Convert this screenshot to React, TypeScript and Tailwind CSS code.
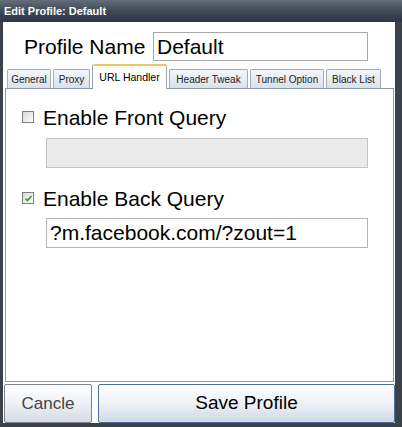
import React from 'react'

const tabs = [
    { label: 'General', w: 'w-[44px]' },
    { label: 'Proxy', w: 'w-[37px]' },
    { label: 'URL Handler', w: 'w-[75px]', active: true },
    { label: 'Header Tweak', w: 'w-[79px]' },
    { label: 'Tunnel Option', w: 'w-[74px]' },
    { label: 'Black List', w: 'w-[55px]' },
]

function CheckBox({ checked }: { checked?: boolean }) {
    return (
        <div className="w-[12px] h-[12px] border border-[#7f7f7f] bg-gradient-to-br from-[#d8d8d8] to-[#ffffff] flex items-center justify-center shrink-0">
            {checked && (
                <svg width="9" height="9" viewBox="0 0 9 9">
                    <path d="M1.5 4.5 L3.5 6.5 L7.5 2" fill="none" stroke="#3f8f3a" strokeWidth="1.6" />
                </svg>
            )}
        </div>
    )
}

export default function App() {
    return (
        <div className="w-[402px] h-[427px] flex flex-col bg-[#3c4249] font-['Liberation_Sans',Arial,sans-serif] overflow-hidden">
            {/* title bar */}
            <div className="h-[22px] shrink-0 bg-gradient-to-b from-[#646e79] via-[#3f4a56] to-[#2c3642] flex items-center pl-[4px]">
                <span className="text-white font-bold text-[11px] leading-none">Edit Profile: Default</span>
            </div>

            <div className="flex-1 flex flex-col ml-[3px] mr-[7px] bg-white">
                {/* profile name */}
                <div className="flex items-center pt-[7px] pl-[21px] h-[42px] shrink-0">
                    <span className="w-[129px] text-[21px] text-black leading-none">Profile Name</span>
                    <div className="w-[215px] h-[29px] border border-[#a9a9a9] flex items-center pl-[3px] text-[21px] text-black">
                        Default
                    </div>
                </div>

                {/* tabs */}
                <div className="flex items-end gap-[2px] pl-[4px] h-[24px] shrink-0 relative z-10">
                    {tabs.map((t) =>
                        t.active ? (
                            <div
                                key={t.label}
                                className={`${t.w} h-[25px] -mb-[1px] bg-white border border-[#9aa4ae] border-b-0 border-t-2 border-t-[#f0c46a] rounded-t-[2px] flex items-center justify-center text-[10.5px] text-black`}
                            >
                                {t.label}
                            </div>
                        ) : (
                            <div
                                key={t.label}
                                className={`${t.w} h-[19px] bg-gradient-to-b from-[#f4f6f9] to-[#d9e1ea] border border-[#a3acb6] border-b-0 rounded-t-[2px] flex items-center justify-center text-[10px] text-[#222]`}
                            >
                                {t.label}
                            </div>
                        )
                    )}
                </div>

                {/* panel */}
                <div className="h-[294px] shrink-0 ml-[2px] mr-[1px] border border-[#8f9aa5] bg-white flex flex-col pt-[16px]">
                    <div className="flex items-center gap-[9px] pl-[16px] h-[24px]">
                        <CheckBox />
                        <span className="text-[21px] leading-none text-black">Enable Front Query</span>
                    </div>
                    <div className="ml-[40px] mt-[9px] w-[322px] h-[30px] border border-[#c3c3c3] bg-[#ebebeb]" />
                    <div className="flex items-center gap-[9px] pl-[16px] h-[24px] mt-[18px]">
                        <CheckBox checked />
                        <span className="text-[21px] leading-none text-black">Enable Back Query</span>
                    </div>
                    <div className="ml-[40px] mt-[8px] w-[322px] h-[30px] border border-[#b5b5b5] bg-white flex items-center pl-[3px] text-[21px] text-black">
                        ?m.facebook.com/?zout=1
                    </div>
                </div>

                {/* buttons */}
                <div className="flex gap-[6px] pl-[1px] mt-[2px] h-[39px] shrink-0">
                    <button className="w-[88px] h-full border border-[#7d848c] rounded-[2px] bg-gradient-to-b from-[#ffffff] via-[#eef1f5] to-[#d3dbe6] text-[17px] text-[#444]">
                        Cancle
                    </button>
                    <button className="flex-1 h-full border border-[#4f6f9e] rounded-[2px] bg-gradient-to-b from-[#ffffff] via-[#eef2f7] to-[#cfd9e8] text-[19px] text-black">
                        Save Profile
                    </button>
                </div>
            </div>
            <div className="h-[4px] shrink-0" />
        </div>
    )
}
